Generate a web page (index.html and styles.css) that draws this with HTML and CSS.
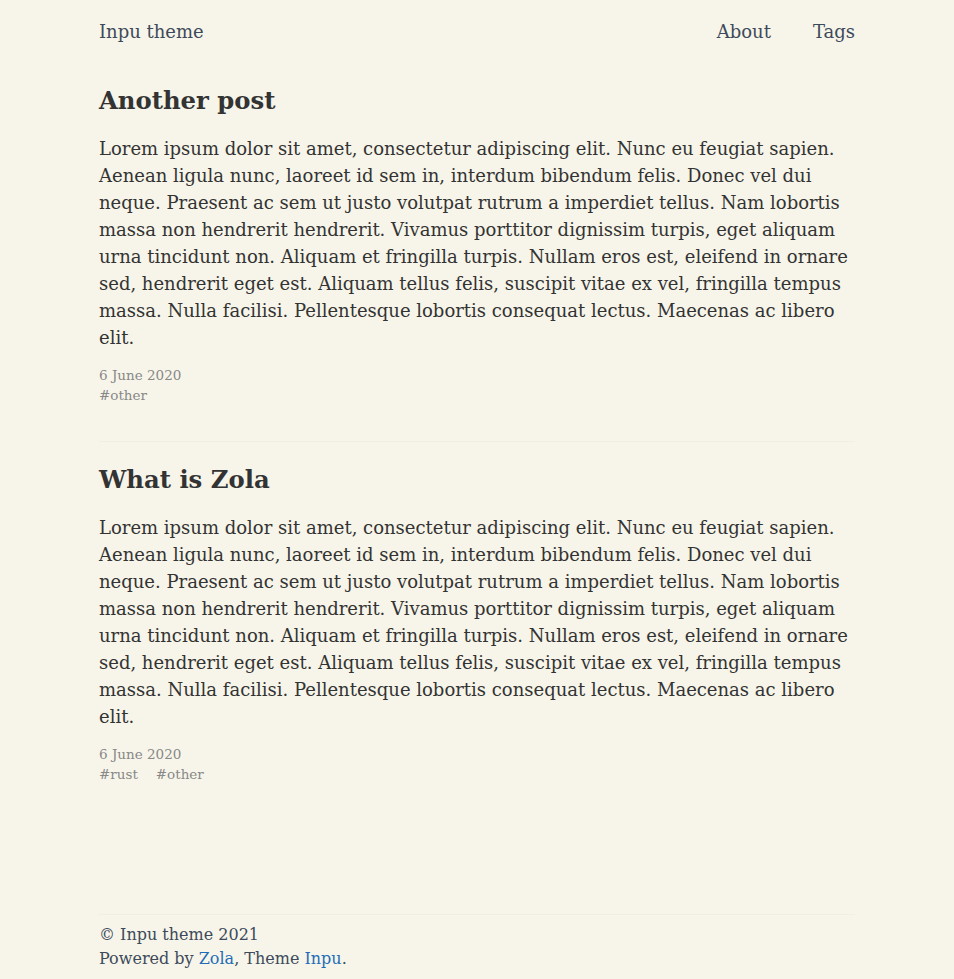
FILE: index.html
```html
<!DOCTYPE html>
<html lang="en">
<head>
<meta charset="utf-8">
<title>Inpu theme</title>
<link rel="stylesheet" href="styles.css">
</head>
<body>
<div class="page">
  <header class="site-header">
    <a class="brand" href="#">Inpu theme</a>
    <nav class="nav">
      <a href="#">About</a>
      <a href="#">Tags</a>
    </nav>
  </header>
  <main class="posts">
    <article class="post">
      <h2 class="post-title">Another post</h2>
      <p class="post-body">Lorem ipsum dolor sit amet, consectetur adipiscing elit. Nunc eu feugiat sapien. Aenean ligula nunc, laoreet id sem in, interdum bibendum felis. Donec vel dui neque. Praesent ac sem ut justo volutpat rutrum a imperdiet tellus. Nam lobortis massa non hendrerit hendrerit. Vivamus porttitor dignissim turpis, eget aliquam urna tincidunt non. Aliquam et fringilla turpis. Nullam eros est, eleifend in ornare sed, hendrerit eget est. Aliquam tellus felis, suscipit vitae ex vel, fringilla tempus massa. Nulla facilisi. Pellentesque lobortis consequat lectus. Maecenas ac libero elit.</p>
      <div class="meta">
        <div class="date">6 June 2020</div>
        <div class="tags"><a href="#">#other</a></div>
      </div>
    </article>
    <hr class="sep">
    <article class="post">
      <h2 class="post-title">What is Zola</h2>
      <p class="post-body">Lorem ipsum dolor sit amet, consectetur adipiscing elit. Nunc eu feugiat sapien. Aenean ligula nunc, laoreet id sem in, interdum bibendum felis. Donec vel dui neque. Praesent ac sem ut justo volutpat rutrum a imperdiet tellus. Nam lobortis massa non hendrerit hendrerit. Vivamus porttitor dignissim turpis, eget aliquam urna tincidunt non. Aliquam et fringilla turpis. Nullam eros est, eleifend in ornare sed, hendrerit eget est. Aliquam tellus felis, suscipit vitae ex vel, fringilla tempus massa. Nulla facilisi. Pellentesque lobortis consequat lectus. Maecenas ac libero elit.</p>
      <div class="meta">
        <div class="date">6 June 2020</div>
        <div class="tags"><a href="#">#rust</a><a href="#">#other</a></div>
      </div>
    </article>
  </main>
  <footer class="site-footer">
    <hr class="sep">
    <div class="copy">© Inpu theme 2021</div>
    <div class="powered">Powered by <a href="#">Zola</a>, Theme <a href="#">Inpu</a>.</div>
  </footer>
</div>
</body>
</html>
```
FILE: styles.css
```css
html, body {
  margin: 0;
  padding: 0;
  background: #f7f5e9;
}
body {
  font-family: "DejaVu Serif", serif;
  color: #333333;
  font-size: 18px;
  line-height: 1.5;
}
.page {
  width: 756px;
  margin: 0 auto;
  min-height: 100vh;
  display: flex;
  flex-direction: column;
  box-sizing: border-box;
  padding-bottom: 8px;
}
a { text-decoration: none; }
.site-header {
  display: flex;
  justify-content: space-between;
  align-items: center;
  padding-top: 18px;
  height: 27px;
}
.brand, .nav a {
  color: #3d4a5b;
  font-size: 18px;
}
.nav {
  display: flex;
  gap: 42px;
}
.posts {
  padding-top: 38px;
}
.post-title {
  margin: 0;
  font-size: 24.3px;
  font-weight: bold;
  line-height: 36px;
  color: #333333;
}
.post-body {
  margin: 16px 0 0 0;
  font-size: 18px;
  line-height: 27px;
}
.meta {
  margin-top: 14px;
  font-size: 13.5px;
  line-height: 20px;
  color: #888888;
}
.tags {
  display: flex;
  gap: 18px;
}
.tags a { color: #888888; }
.sep {
  border: 0;
  height: 1px;
  background: #f1efe2;
  margin: 36px 0 20px 0;
}
.site-footer {
  margin-top: auto;
  color: #3d4a5b;
  font-size: 16px;
  line-height: 24px;
}
.site-footer .sep {
  margin: 0 0 8px 0;
}
.site-footer a { color: #1f6db8; }
```
